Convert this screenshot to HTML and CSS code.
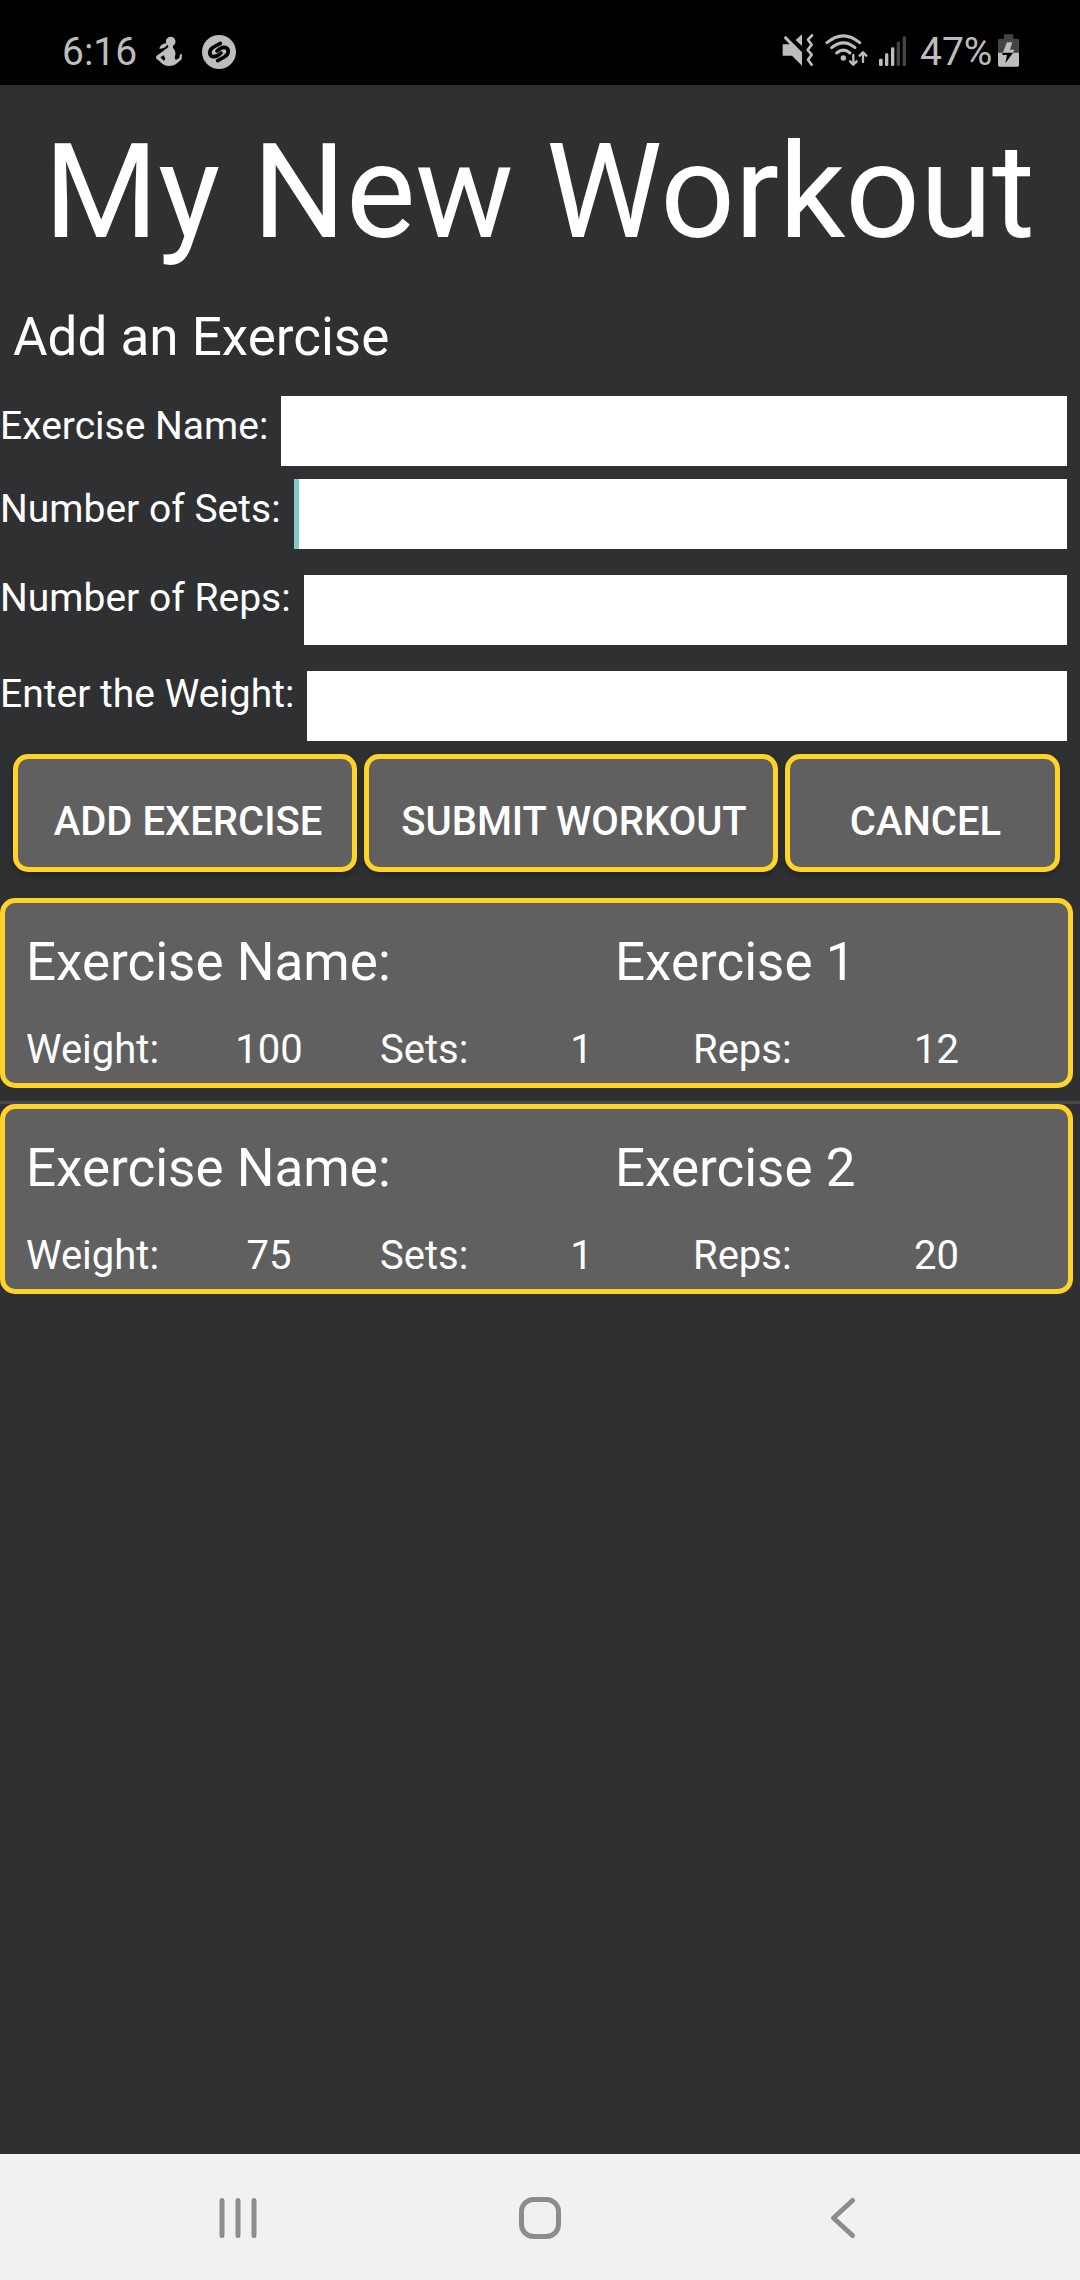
FILE: index.html
```html
<!DOCTYPE html>
<html lang="en">
<head>
<meta charset="utf-8">
<title>My New Workout</title>
<link rel="stylesheet" href="styles.css">
</head>
<body>
<div class="screen">
  <header class="status">
    <div class="status-left">
      <span class="clock">6:16</span>
      <svg class="icon-fitness" viewBox="345 40 84 105" width="28" height="35"><circle cx="392" cy="66" r="14.500"/><path d="M379 71C368 71 360 78 358 87C369 87 378 82 382 75Z"/><path d="M384 76L399 76L399 85C406 92 409 101 404 113L407 121L418 115L420 104L426 104L425 119L412 130C402 140 378 142 368 133L348 116L349 109L371 93C376 88 382 87 385 83ZM371 107L361 113L372 124L376 117Z" fill-rule="evenodd"/></svg>
      <svg class="icon-song" viewBox="483 41 108 108" width="36" height="36"><circle cx="537" cy="95" r="51"/><g class="song-mark"><path d="M541 69L521 80C504 90 507 107 520 109C529 110 536 105 543 98"/><path d="M533 121L553 110C570 100 567 83 554 81C545 80 538 85 531 92"/></g></svg>
    </div>
    <div class="status-right">
      <svg viewBox="36 40 99 102" width="33" height="34"><path d="M38 74H59L41 55L47 48L96 98V138L66 108H38Z"/><path d="M96 44V79L77 61Z"/><path class="line" stroke-width="8" d="M126 47L114 60L125 75L113 91L125 105L114 120L125 135"/></svg>
      <svg class="icon-wifi" viewBox="165 40 129 102" width="43" height="34"><circle cx="220" cy="115" r="8"/><g class="line" stroke-width="9"><path d="M171 69Q220 28 269 69"/><path d="M185 84Q220 55 255 84"/><path d="M200 100Q220 83 240 100"/></g><g class="line" stroke-width="7"><path d="M250 106V134M240 125L250 135L260 125"/><path d="M279 127V99M269 108L279 98L289 108"/></g></svg>
      <svg class="icon-signal" viewBox="327 40 84 102" width="28" height="34"><rect x="327" y="117" width="11" height="22" rx="4"/><rect x="345" y="101" width="10" height="38" rx="4"/><rect x="363" y="83" width="10" height="56" rx="4"/><rect class="dim" x="380" y="66" width="10" height="73" rx="4"/><rect class="dim" x="398" y="50" width="10" height="89" rx="4"/></svg>
      <span class="percent">47%</span>
      <svg class="icon-battery" viewBox="684 40 63 102" width="21" height="34"><path class="dim" d="M702 44H730V57H742Q747 57 747 62V100H684V62Q684 57 689 57H702Z"/><path d="M684 99H747V136Q747 141 742 141H689Q684 141 684 136Z"/><path d="M711 68H727L720 90H733L728 100H698Z"/><path class="dark" d="M698 99L697 106H711L706 131L729 99Z"/></svg>
    </div>
  </header>

  <main class="content">
    <h1 class="title">My New Workout</h1>
    <h2 class="subtitle">Add an Exercise</h2>

    <form class="form">
      <div class="field"><label class="field-label" for="name">Exercise Name:</label><input class="field-input" id="name"></div>
      <div class="field"><label class="field-label" for="sets">Number of Sets:</label><input class="field-input focused" id="sets"></div>
      <div class="field spaced"><label class="field-label" for="reps">Number of Reps:</label><input class="field-input" id="reps"></div>
      <div class="field spaced"><label class="field-label" for="weight">Enter the Weight:</label><input class="field-input" id="weight"></div>
    </form>

    <div class="actions">
      <button class="btn">ADD EXERCISE</button>
      <button class="btn">SUBMIT WORKOUT</button>
      <button class="btn">CANCEL</button>
    </div>

    <section class="list">
      <article class="card">
        <div class="card-name"><span>Exercise Name:</span><span>Exercise 1</span></div>
        <div class="card-stats"><span>Weight:</span><span class="value">100</span><span class="sets">Sets:</span><span class="value">1</span><span class="reps">Reps:</span><span class="value">12</span></div>
      </article>
      <div class="divider"></div>
      <article class="card">
        <div class="card-name"><span>Exercise Name:</span><span>Exercise 2</span></div>
        <div class="card-stats"><span>Weight:</span><span class="value">75</span><span class="sets">Sets:</span><span class="value">1</span><span class="reps">Reps:</span><span class="value">20</span></div>
      </article>
    </section>
  </main>

  <nav class="navbar">
    <svg viewBox="0 0 48 48" width="48" height="48"><path d="M8 6.500V41.500M24 6.500V41.500M40 6.500V41.500"/></svg>
    <svg viewBox="0 0 48 48" width="48" height="48"><rect x="5.500" y="5.500" width="37" height="37" rx="12"/></svg>
    <svg viewBox="0 0 48 48" width="48" height="48"><path d="M34.500 6.500L15.500 24L34.500 41.500"/></svg>
  </nav>
</div>
</body>
</html>
```

FILE: styles.css
```css
* {
  box-sizing: border-box;
}

body {
  margin: 0;
  font-family: Roboto, "Liberation Sans", sans-serif;
  color: #fff;
  background: #2f3032;
}

.screen {
  display: flex;
  flex-direction: column;
  width: 1080px;
  height: 2280px;
}

.status {
  display: flex;
  justify-content: space-between;
  height: 85px;
  padding: 27px 61px 0 62px;
  background: #000;
  color: #bdbdbd;
  fill: #bdbdbd;
  font-size: 39px;
  line-height: 51px;
}

.status-left,
.status-right {
  display: flex;
  align-items: flex-start;
}

.status-right svg {
  margin-top: 6px;
}

.clock {
  width: 93px;
}

.icon-fitness {
  margin-top: 6px;
}

.icon-song {
  margin: 7px 0 0 18px;
}

.song-mark {
  fill: none;
  stroke: #000;
  stroke-width: 11;
  stroke-linecap: round;
}

.icon-wifi {
  margin-left: 10px;
}

.icon-signal {
  margin-left: 11px;
}

.percent {
  width: 78px;
  margin-left: 13px;
}

.line {
  fill: none;
  stroke: #bdbdbd;
  stroke-linecap: round;
  stroke-linejoin: round;
}

.dim {
  fill: #444;
}

.dark {
  fill: #000;
}

.content {
  flex: 1;
}

.title {
  margin: 0;
  padding: 30px 0 0 44px;
  font-size: 131px;
  font-weight: 400;
  line-height: 154px;
  letter-spacing: -0.1px;
  white-space: nowrap;
}

.subtitle {
  margin: 0;
  padding: 37px 0 0 13px;
  font-size: 53px;
  font-weight: 400;
  line-height: 62px;
}

.form {
  display: flex;
  flex-direction: column;
  gap: 13px;
  padding: 28px 13px 0 0;
}

.field {
  display: flex;
  align-items: flex-start;
  gap: 13px;
}

.field-label {
  margin-top: 4px;
  font-size: 39px;
  line-height: 53px;
  white-space: nowrap;
}

.field-input {
  flex: 1;
  min-width: 0;
  height: 70px;
  padding: 0;
  border: 0;
  border-radius: 0;
  background: #fff;
}

.field-input.focused {
  border-left: 5px solid #80cbc4;
}

.spaced .field-label {
  margin-top: 10px;
}

.spaced .field-input {
  margin-top: 13px;
}

.actions {
  display: grid;
  grid-template-columns: 344px 414px 275px;
  gap: 7px;
  padding: 13px 0 0 13px;
}

.btn {
  height: 118px;
  padding: 17px 0 0 6px;
  border: 5px solid #ffd426;
  border-radius: 15px;
  background: #606060;
  color: #fff;
  box-shadow: 0 3px 6px rgba(0, 0, 0, 0.3);
  font-family: inherit;
  font-size: 40px;
  font-weight: 500;
  white-space: nowrap;
}

.list {
  padding-top: 26px;
}

.card {
  width: 1073px;
  height: 190px;
  padding: 28px 0 0 21px;
  border: 5px solid #ffd426;
  border-radius: 15px;
  background: #606060;
}

.card-name {
  display: grid;
  grid-template-columns: 589px 1fr;
  font-size: 53px;
  line-height: 62px;
}

.card-stats {
  display: grid;
  grid-template-columns: 157px 172px 151px 151px 201px 157px;
  padding-top: 34px;
  font-size: 40px;
  line-height: 46px;
}

.value {
  text-align: center;
}

.sets {
  padding-left: 25px;
}

.reps {
  padding-left: 36px;
}

.divider {
  height: 3px;
  margin-top: 13px;
  background: #48494b;
}

.navbar {
  display: flex;
  justify-content: space-between;
  height: 126px;
  padding: 40px 214px 0;
  background: #f1f1f1;
}

.navbar svg {
  fill: none;
  stroke: #8c8c8c;
  stroke-width: 5;
  stroke-linecap: round;
  stroke-linejoin: round;
}
```
